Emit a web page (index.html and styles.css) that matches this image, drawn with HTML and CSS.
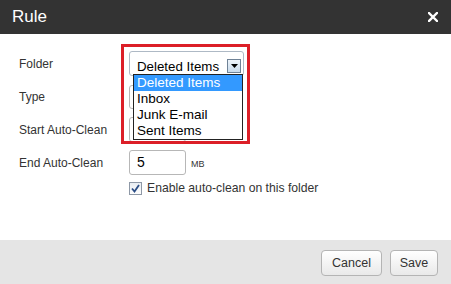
FILE: index.html
```html
<!DOCTYPE html>
<html lang="en">
<head>
    <meta charset="UTF-8">
    <title>Rule</title>
    <link rel="stylesheet" href="styles.css">
</head>
<body>
    <div class="dialog">
        <div class="dialog-header">
            <span class="dialog-title">Rule</span>
            <span class="close-btn">
                <svg width="10" height="10" viewBox="0 0 10 10"><path d="M1 1 L9 9 M9 1 L1 9" stroke="#fff" stroke-width="2.4" stroke-linecap="square"/></svg>
            </span>
        </div>

        <div class="dialog-body">
            <div class="form-row">
                <span class="form-label">Folder</span>
                <div class="folder-field">
                    <div class="select-box">
                        <span class="select-text">Deleted Items</span>
                        <span class="select-arrow">
                            <svg width="7" height="4" viewBox="0 0 7 4"><path d="M0 0 H7 L3.5 4 Z" fill="#000"/></svg>
                        </span>
                    </div>
                    <!-- lista desplegada -->
                    <ul class="dropdown-list">
                        <li class="selected">Deleted Items</li>
                        <li>Inbox</li>
                        <li>Junk E-mail</li>
                        <li>Sent Items</li>
                    </ul>
                    <div class="highlight-box"></div>
                </div>
            </div>
            <div class="form-row">
                <span class="form-label">Type</span>
                <div class="plain-select"></div>
            </div>
            <div class="form-row">
                <span class="form-label">Start Auto-Clean</span>
                <div class="num-input"></div>
            </div>
            <div class="form-row">
                <span class="form-label">End Auto-Clean</span>
                <div class="num-input">5</div>
                <span class="unit">MB</span>
            </div>
            <div class="check-row">
                <span class="checkbox">
                    <svg width="11" height="11" viewBox="0 0 11 11"><path d="M2 5.5 L4.5 8.5 L9 2" fill="none" stroke="#2b4d86" stroke-width="1.8"/></svg>
                </span>
                <span class="check-label">Enable auto-clean on this folder</span>
            </div>
        </div>

        <div class="dialog-footer">
            <span class="button btn-cancel">Cancel</span>
            <span class="button btn-save">Save</span>
        </div>
    </div>
</body>
</html>
```

FILE: styles.css
```css
:root {
    --header-color: #333333;
    --text-color: #333;
    --footer-color: #e5e5e5;
    --input-border: #b7b7b7;
    --accent-red: #dc1f28;
    --select-blue: #3399ff;
}

body, html {
    margin: 0;
    padding: 0;
    font-family: 'Liberation Sans', Arial, sans-serif;
    color: var(--text-color);
    background: #fff;
}

.dialog {
    width: 451px;
    height: 284px;
    display: flex;
    flex-direction: column;
}

.dialog-header {
    height: 34px;
    background-color: var(--header-color);
    display: flex;
    align-items: center;
    justify-content: space-between;
    padding: 0 13px 0 12px;
}

.dialog-title {
    color: #fff;
    font-size: 17px;
}

.close-btn {
    display: flex;
}

.dialog-body {
    flex: 1;
    padding: 17px 0 0 19px;
}

.form-row {
    display: flex;
    align-items: center;
    height: 25px;
    margin-bottom: 8px;
    font-size: 12px;
}

.form-label {
    width: 110px;
}

.folder-field {
    position: relative;
    width: 115px;
    height: 25px;
}

.select-box {
    box-sizing: border-box;
    height: 25px;
    border: 1px solid #aeb9c5;
    border-radius: 3px;
    display: flex;
    align-items: center;
    justify-content: space-between;
    padding: 5px 2px 0 7px;
    font-size: 13.3px;
    color: #000;
}

.select-arrow {
    box-sizing: border-box;
    width: 14px;
    height: 14px;
    border: 1px solid #6f8296;
    background: linear-gradient(#eef4fa, #c9dbec);
    display: flex;
    align-items: center;
    justify-content: center;
}

.dropdown-list {
    position: absolute;
    top: 23px;
    left: 4px;
    width: 110px;
    box-sizing: border-box;
    margin: 0;
    padding: 0;
    list-style: none;
    background: #fff;
    border: 1px solid #222;
    font-size: 13.5px;
    color: #000;
    z-index: 2;
}

.dropdown-list li {
    height: 16px;
    line-height: 16px;
    padding-left: 3px;
}

.dropdown-list li.selected {
    background-color: var(--select-blue);
    color: #fff;
}

.highlight-box {
    position: absolute;
    top: -7px;
    left: -8px;
    width: 129px;
    height: 100px;
    box-sizing: border-box;
    border: 3px solid var(--accent-red);
    z-index: 3;
}

.plain-select {
    box-sizing: border-box;
    width: 110px;
    height: 24px;
    border: 1px solid var(--input-border);
    border-radius: 3px;
}

.num-input {
    box-sizing: border-box;
    width: 57px;
    height: 25px;
    border: 1px solid var(--input-border);
    border-radius: 3px;
    padding-left: 7px;
    line-height: 23px;
    font-size: 14px;
    color: #000;
}

.unit {
    font-size: 9px;
    margin: 3px 0 0 5px;
}

.check-row {
    display: flex;
    align-items: center;
    margin: -2px 0 0 110px;
    font-size: 12.2px;
}

.checkbox {
    box-sizing: border-box;
    width: 13px;
    height: 13px;
    border: 1px solid #8e98a6;
    background: linear-gradient(#e9edf2, #fdfdfd);
    display: flex;
    align-items: center;
    justify-content: center;
    margin-right: 5px;
}

.dialog-footer {
    height: 44px;
    background-color: var(--footer-color);
    display: flex;
    align-items: center;
    justify-content: flex-end;
    gap: 8px;
    padding-right: 13px;
}

.button {
    box-sizing: border-box;
    height: 26px;
    line-height: 24px;
    text-align: center;
    font-size: 12.5px;
    color: #333;
    border: 1px solid #b4b4b4;
    border-radius: 4px;
    background: linear-gradient(#ffffff, #e9e9e9);
    margin-top: 1px;
}

.btn-cancel {
    width: 61px;
}

.btn-save {
    width: 48px;
}
```
